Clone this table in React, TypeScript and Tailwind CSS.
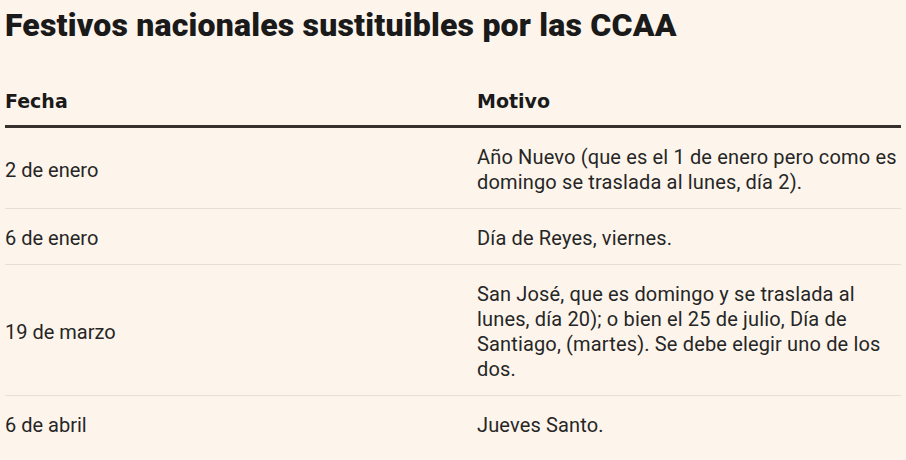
const rows = [
  { fecha: '2 de enero', motivo: 'Año Nuevo (que es el 1 de enero pero como es domingo se traslada al lunes, día 2).' },
  { fecha: '6 de enero', motivo: 'Día de Reyes, viernes.' },
  {
    fecha: '19 de marzo',
    motivo:
      'San José, que es domingo y se traslada al lunes, día 20); o bien el 25 de julio, Día de Santiago, (martes). Se debe elegir uno de los dos.',
  },
  { fecha: '6 de abril', motivo: 'Jueves Santo.' },
];

export default function App() {
  return (
    <div className="min-h-screen bg-[#fdf5ec] px-[5px] text-[#262626] [font-family:Roboto,'Liberation_Sans',sans-serif]">
      <h1 className="pt-[7px] text-[32px] leading-[36px] font-black tracking-[0.2px] text-[#1a1a1a]">
        Festivos nacionales sustituibles por las CCAA
      </h1>
      <table className="mt-[47px] w-full border-collapse text-left">
        <thead>
          <tr className="border-b-[3px] border-[#36312c] [font-family:'DejaVu_Sans',sans-serif]">
            <th className="w-[472px] pb-[13px] text-[19px] leading-[22px] font-bold text-[#1a1a1a]">Fecha</th>
            <th className="pb-[13px] text-[19px] leading-[22px] font-bold text-[#1a1a1a]">Motivo</th>
          </tr>
        </thead>
        <tbody>
          {rows.map((r) => (
            <tr key={r.fecha} className="border-b border-[#e8dfd4] last:border-b-0">
              <td className="pt-[17px] pb-[13px] align-middle text-[20px] leading-[25px]">{r.fecha}</td>
              <td className="pt-[17px] pb-[13px] text-[20px] leading-[25px] tracking-[0.15px]">{r.motivo}</td>
            </tr>
          ))}
        </tbody>
      </table>
    </div>
  );
}
